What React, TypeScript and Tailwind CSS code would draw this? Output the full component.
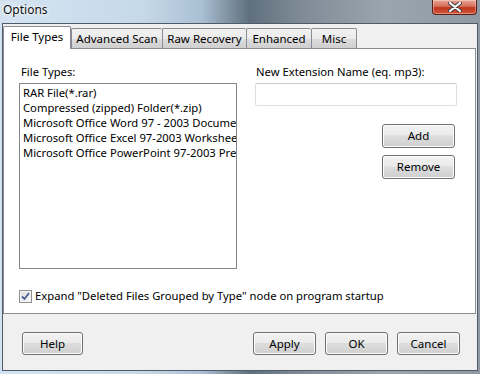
import React, { useState } from 'react';

const font = "font-['Noto_Sans','Open_Sans',sans-serif]";

const tabs = [
  { label: 'File Types', w: 'w-[68px]' },
  { label: 'Advanced Scan', w: 'w-[91px]' },
  { label: 'Raw Recovery', w: 'w-[84px]' },
  { label: 'Enhanced', w: 'w-[65px]' },
  { label: 'Misc', w: 'w-[46px]' },
];

const fileTypes = [
  'RAR File(*.rar)',
  'Compressed (zipped) Folder(*.zip)',
  'Microsoft Office Word 97 - 2003 Document(*.doc)',
  'Microsoft Office Excel 97-2003 Worksheet(*.xls)',
  'Microsoft Office PowerPoint 97-2003 Presentation(*.ppt)',
];

// Win7 style push button
const Btn = ({ label, w }: { label: string; w: string }) => (
  <button
    className={`${w} h-[23px] rounded-[3px] border border-[#707070] bg-[linear-gradient(180deg,#f2f2f2_0%,#ebebeb_45%,#dddddd_50%,#cfcfcf_100%)] shadow-[inset_0_0_0_1px_#fcfcfc] text-[11.5px] leading-none text-black flex items-center justify-center`}
  >
    {label}
  </button>
);

export default function App() {
  const [active] = useState(0);
  const [checked, setChecked] = useState(true);

  return (
    <div
      className={`${font} w-[480px] h-[374px] flex flex-col px-[2px] pb-[3px] bg-[linear-gradient(90deg,#d3e3f1_0%,#c6d9ea_30%,#a9bfd3_42%,#5f6f7d_52%,#7d8a95_62%,#9aa5ae_80%,#8e99a3_100%)]`}
    >
      {/* title bar */}
      <div className="h-[23px] flex items-center relative">
        <span className="text-[12px] text-[#111] pl-[1px] -mt-[3px] [text-shadow:0_0_6px_#ffffff,0_0_3px_#ffffff]">
          Options
        </span>
        <div className="absolute right-[1px] top-0 w-[45px] h-[15px] rounded-b-[4px] border border-t-0 border-[#5a1e16] bg-[linear-gradient(180deg,#e8a595_0%,#d6705c_45%,#c0341c_55%,#d0563a_100%)] shadow-[inset_0_0_0_1px_rgba(255,255,255,0.35)] flex items-center justify-center">
          <svg width="14" height="10" viewBox="0 0 14 10">
            <path d="M2 1 L12 9 M12 1 L2 9" stroke="#3a3f48" strokeWidth="4" strokeLinecap="round" />
            <path d="M2 1 L12 9 M12 1 L2 9" stroke="#ffffff" strokeWidth="2.2" strokeLinecap="round" />
          </svg>
        </div>
      </div>

      {/* client area */}
      <div className="flex-1 bg-[#f0f0f0] border border-[#4f5c68] flex flex-col">
        {/* tab strip */}
        <div className="flex items-end h-[23px] mt-[1px] relative z-10">
          {tabs.map((t, i) =>
            i === active ? (
              <div
                key={t.label}
                className={`${t.w} h-[23px] -mb-px bg-white border border-b-0 border-[#898c95] rounded-t-[2px] text-[11.5px] text-black flex items-center justify-center pb-[2px]`}
              >
                {t.label}
              </div>
            ) : (
              <div
                key={t.label}
                className={`${t.w} h-[20px] border-t border-l ${i === tabs.length - 1 ? 'border-r' : ''} border-[#898c95] rounded-t-[2px] bg-[linear-gradient(180deg,#f2f2f2_0%,#ebebeb_50%,#dddddd_51%,#cfcfcf_100%)] text-[11.5px] text-black flex items-center justify-center`}
              >
                {t.label}
              </div>
            )
          )}
        </div>

        {/* tab panel */}
        <div className="h-[266px] mr-[1px] bg-white border border-[#898c95] flex flex-col pl-[15px] pt-[15px]">
          <div className="flex">
            <div className="w-[218px] flex flex-col">
              <div className="h-[16px] text-[11.25px] leading-[16px] text-black pl-[2px] mb-[3px]">File Types:</div>
              <div className="h-[186px] border border-[#828790] bg-white overflow-hidden pl-[3px] pt-[1px]">
                {fileTypes.map((f) => (
                  <div key={f} className="h-[15px] text-[11.25px] leading-[15px] text-black whitespace-nowrap overflow-hidden">
                    {f}
                  </div>
                ))}
              </div>
            </div>
            <div className="ml-[18px] w-[202px] flex flex-col">
              <div className="h-[16px] text-[11.25px] leading-[16px] text-black pl-[1px] mb-[3px] whitespace-nowrap">
                New Extension Name (eq. mp3):
              </div>
              <input
                className="h-[23px] w-[202px] rounded-[2px] border border-[#dadfe5] border-t-[#c8ccd2] bg-white outline-none"
                defaultValue=""
              />
              <div className="flex flex-col items-end pr-[2px] mt-[18px] gap-[7px]">
                <Btn label="Add" w="w-[73px] h-[24px]" />
                <Btn label="Remove" w="w-[73px] h-[24px]" />
              </div>
            </div>
          </div>

          <label className="flex items-center mt-[19px] cursor-default" onClick={() => setChecked(!checked)}>
            <span className="w-[13px] h-[13px] border border-[#8e8f8f] bg-[linear-gradient(135deg,#dcdcdc_0%,#fbfbfb_100%)] shadow-[inset_0_0_0_1px_#f4f4f4] flex items-center justify-center">
              {checked && (
                <svg width="9" height="9" viewBox="0 0 9 9">
                  <path d="M1 4.5 L3.5 7 L8 1" stroke="#4a5f97" strokeWidth="1.8" fill="none" />
                </svg>
              )}
            </span>
            <span className="ml-[3px] text-[11.25px] leading-[16px] text-black whitespace-nowrap">
              Expand "Deleted Files Grouped by Type" node on program startup
            </span>
          </label>
        </div>

        {/* bottom buttons */}
        <div className="flex items-center mt-[18px] pl-[19px] pr-[17px]">
          <Btn label="Help" w="w-[61px]" />
          <div className="flex-1" />
          <div className="flex gap-[9px]">
            <Btn label="Apply" w="w-[63px]" />
            <Btn label="OK" w="w-[63px]" />
            <Btn label="Cancel" w="w-[63px]" />
          </div>
        </div>
      </div>
    </div>
  );
}
